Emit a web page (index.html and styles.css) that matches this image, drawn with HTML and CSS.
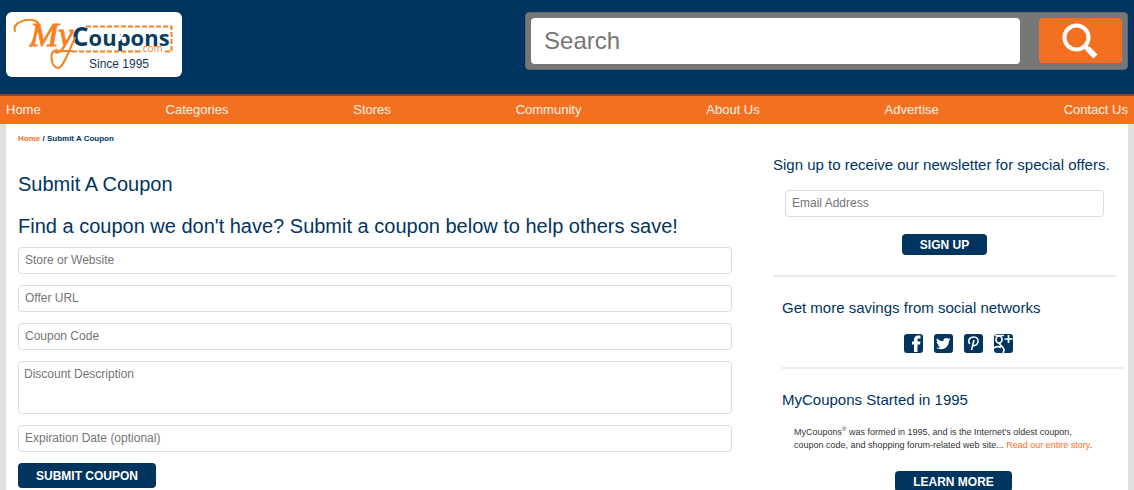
FILE: index.html
```
<!DOCTYPE html>
<html lang="en">
<head>
<meta charset="utf-8">
<title>Submit A Coupon - MyCoupons</title>
<link rel="stylesheet" href="styles.css">
</head>
<body>
<header class="header">
  <a class="logo" href="#" aria-label="MyCoupons.com, since 1995">
    <svg class="logo-art" viewBox="0 0 176 65" role="img" aria-hidden="true">
      <path class="ticket" d="M80 14.500H165.500V39.500H158M134 39.500H62"/>
      <text class="logo-coupons" x="66" y="34"><tspan class="logo-capital">C</tspan>oupons</text>
      <path class="clover" d="M112 25c-2-3 1-5 2-2 2-3 5 0 2 2 3 1 1 4-1 2 0 3-4 3-3 0-3 1-4-2 0-2Z"/>
      <text class="logo-com" x="134" y="40">.com</text>
      <path class="swash" d="M9 19C5 9 28 4 32 11C34 16 27 28 25 34"/>
      <text class="logo-my" x="24" y="34">My</text>
      <path class="swash" d="M69 26C62 41 57 56 52 56C45 56 43 39 49 39H66"/>
      <text class="logo-since" x="83" y="56">Since 1995</text>
    </svg>
  </a>
  <form class="search">
    <input class="search-input" type="search" placeholder="Search" aria-label="Search">
    <button class="search-button" type="button" aria-label="Search">
      <svg class="search-icon" viewBox="0 0 38 38" aria-hidden="true">
        <circle cx="14.500" cy="15.500" r="12"/>
        <path class="lens-neck" d="M23 24L26 27"/>
        <path class="lens-handle" d="M25.500 26.500L33.500 34.500"/>
      </svg>
    </button>
  </form>
</header>
<nav class="nav">
  <a href="#">Home</a>
  <a href="#">Categories</a>
  <a href="#">Stores</a>
  <a href="#">Community</a>
  <a href="#">About Us</a>
  <a href="#">Advertise</a>
  <a href="#">Contact Us</a>
</nav>
<div class="page">
  <main class="main">
    <div class="breadcrumb"><a href="#">Home</a> / Submit A Coupon</div>
    <h1 class="title">Submit A Coupon</h1>
    <h2 class="title">Find a coupon we don't have? Submit a coupon below to help others save!</h2>
    <form class="coupon-form">
      <input class="field" type="text" placeholder="Store or Website" aria-label="Store or Website">
      <input class="field" type="text" placeholder="Offer URL" aria-label="Offer URL">
      <input class="field" type="text" placeholder="Coupon Code" aria-label="Coupon Code">
      <textarea class="field area" placeholder="Discount Description" aria-label="Discount Description"></textarea>
      <input class="field" type="text" placeholder="Expiration Date (optional)" aria-label="Expiration Date (optional)">
      <button class="button submit" type="button">SUBMIT COUPON</button>
    </form>
  </main>
  <aside class="side">
    <section class="newsletter">
      <h3 class="side-title">Sign up to receive our newsletter for special offers.</h3>
      <form class="newsletter-form">
        <input class="field" type="email" placeholder="Email Address" aria-label="Email Address">
        <button class="button" type="button">SIGN UP</button>
      </form>
    </section>
    <section class="social">
      <h3 class="side-title">Get more savings from social networks</h3>
      <div class="icons">
        <a href="#" aria-label="Facebook"><svg viewBox="0 0 19 19"><rect class="tile" width="19" height="19" rx="3"/><path class="mark" d="M10 18V10.500H8V7.500H10V6C10 3 11.500 1.500 14 1.500H16.500V4.500H15C14 4.500 13.500 5 13.500 6V7.500H16.500L16 10.500H13.500V18Z"/></svg></a>
        <a href="#" aria-label="Twitter"><svg viewBox="0 0 19 19"><rect class="tile" width="19" height="19" rx="3"/><path class="mark" d="M16.500 5.200l-1.700.5c.7-.4 1.100-1 1.300-1.700l-1.900.8c-2-2-5.400-.5-4.900 2.500C6.700 7.200 4.500 6 3 4.200c-.8 1.500-.4 3.100 1 4L2.600 7.800c.1 1.500 1 2.500 2.400 2.900H3.600c.5 1.200 1.400 1.900 2.700 2C5.100 13.700 3.600 14 2 13.800c6 3.600 12.800.2 12.900-6.800Z"/></svg></a>
        <a href="#" aria-label="Pinterest"><svg viewBox="0 0 19 19"><rect class="tile" width="19" height="19" rx="3"/><path class="pin" d="M6 10C3 7 5.500 3 9.500 3c3.800 0 5.200 2.500 4.400 5.200C13 11.700 9.500 12.500 8.500 10.500M10 6L7.500 16"/></svg></a>
        <a href="#" aria-label="Google Plus"><svg viewBox="0 0 19 19"><rect class="tile" width="19" height="19" rx="3"/><ellipse class="plus" cx="5" cy="5.500" rx="3" ry="3.600"/><path class="plus" d="M1 1.500H10M6.500 9C4 11 9.500 12 10 15.500C10 17 9.500 18 9 19M0 14C2 12.500 5 12.500 7 13.500M14.500 1V9M10.500 5H18.500"/></svg></a>
      </div>
    </section>
    <section class="about">
      <h3 class="side-title">MyCoupons Started in 1995</h3>
      <p class="about-text">MyCoupons<sup>®</sup> was formed in 1995, and is the Internet's oldest coupon, coupon code, and shopping forum-related web site... <a href="#">Read our entire story</a>.</p>
      <button class="button" type="button">LEARN MORE</button>
    </section>
  </aside>
</div>
</body>
</html>
```
FILE: styles.css
```
* { box-sizing: border-box; }
body {
  margin: 0;
  background: #e0e0e0;
  color: #00355f;
  font-family: "Liberation Sans", Arial, sans-serif;
}
a { color: #f37021; text-decoration: none; }
h1, h2, h3, p { margin: 0; font-weight: 400; }
input, textarea, button { font-family: inherit; margin: 0; }

.header {
  display: flex;
  justify-content: space-between;
  align-items: flex-start;
  padding: 12px 6px 17px;
  background: #00355f;
}
.logo { display: flex; width: 176px; background: #fff; border-radius: 6px; }
.logo-art { display: block; width: 100%; }
.ticket { fill: none; stroke: #f58220; stroke-width: 2; stroke-dasharray: 5 2; }
.logo-coupons { font: 700 22px "Open Sans", sans-serif; fill: #0a3a5e; }
.logo-capital { font-size: 26px; }
.clover { fill: #fff; }
.logo-com { font: 400 10px "Open Sans", sans-serif; fill: #f58220; }
.logo-my { font: italic 400 34px "Liberation Serif", serif; fill: #f58220; stroke: #f58220; stroke-width: 1; }
.swash { fill: none; stroke: #f58220; stroke-width: 2; stroke-linecap: round; }
.logo-since { font: 400 12px "Liberation Sans", sans-serif; fill: #17365a; }

.search {
  display: flex;
  justify-content: space-between;
  width: 53.740%;
  padding: 5px;
  background: #777;
  border: 1px solid #5c6a76;
  border-radius: 4px;
}
.search-input {
  width: 82.700%;
  height: 46px;
  padding: 0 13px;
  border: 0;
  border-radius: 4px;
  background: #fff;
  font-size: 24px;
}
.search-input::placeholder, .field::placeholder { color: #757575; opacity: 1; }
.search-button {
  display: flex;
  align-items: center;
  justify-content: center;
  width: 83px;
  height: 45px;
  padding: 0;
  border: 0;
  border-radius: 4px;
  background: #f37021;
}
.search-icon { width: 38px; height: 38px; fill: none; stroke: #fff; stroke-width: 4; }
.lens-neck { stroke-width: 4; }
.lens-handle { stroke-width: 6; }

.nav {
  display: flex;
  justify-content: space-between;
  padding: 5px 6px;
  border-top: 2px solid #8b4a28;
  background: #f37021;
  font-size: 13px;
  line-height: 18px;
}
.nav a { color: #fff2e2; }

.page {
  display: flex;
  justify-content: space-between;
  margin: 0 6px;
  padding: 0 3px 16px 12px;
  background: #fff;
}
.main { width: 64.500%; }
.breadcrumb { padding-top: 10px; font-size: 8px; font-weight: 700; line-height: 10px; }
.title { font-size: 20px; line-height: 24px; }
h1.title { margin-top: 28px; }
h2.title { margin-top: 18px; }
.coupon-form { display: flex; flex-direction: column; gap: 11px; margin-top: 9px; }
.field {
  display: block;
  width: 100%;
  height: 27px;
  padding: 0 6px 2px;
  border: 1px solid #dcdcdc;
  border-radius: 4px;
  background: #fff;
  font-size: 12px;
}
.area { height: 53px; padding: 5px; resize: none; }
.button {
  height: 21px;
  padding: 0 18px;
  border: 0;
  border-radius: 4px;
  background: #00355f;
  color: #fff;
  font-size: 12px;
  font-weight: 700;
}
.submit { align-self: flex-start; height: 25px; }

.side { width: 352px; }
.side-title { font-size: 15px; line-height: 18px; }
.newsletter {
  margin-right: 9px;
  padding: 32px 0 20px;
  border-bottom: 2px solid #ebebeb;
}
.newsletter-form {
  display: flex;
  flex-direction: column;
  align-items: center;
  gap: 17px;
  padding: 16px 12px 0;
}
.social, .about { margin-left: 9px; }
.social { padding: 22px 0 14px; border-bottom: 2px solid #ebebeb; }
.icons { display: flex; justify-content: center; gap: 11px; padding: 17px 0 0 9px; }
.icons svg { display: block; width: 19px; height: 19px; }
.tile { fill: #00355f; }
.mark { fill: #fff; }
.pin { fill: none; stroke: #fff; stroke-width: 1.500; }
.plus { fill: none; stroke: #fff; stroke-width: 1.700; }
.about { padding-top: 22px; text-align: center; }
.about .side-title { text-align: left; }
.about-text {
  padding: 17px 24px 19px 12px;
  color: #333;
  font-size: 9px;
  line-height: 13px;
  text-align: left;
}
.about-text sup { font-size: 6px; line-height: 0; }
```
